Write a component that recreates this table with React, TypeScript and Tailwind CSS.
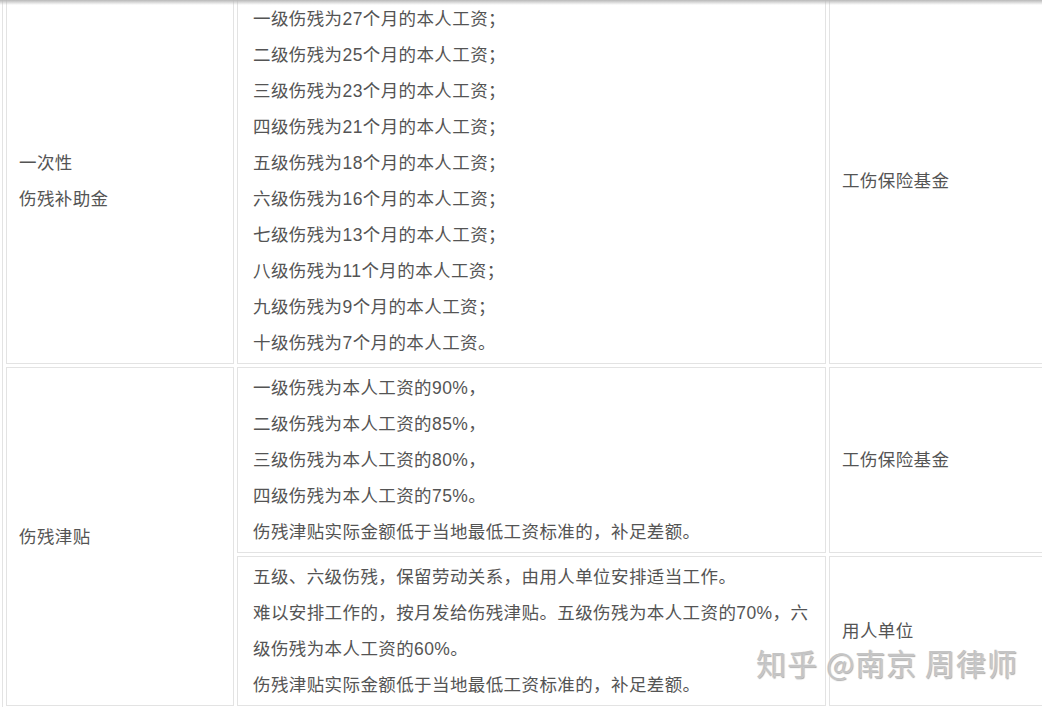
import React from "react";

const Cell = ({ children, className = "" }: { children: React.ReactNode; className?: string }) => (
  <div className={`border border-[#e3e3e3] py-[2px] flex flex-col justify-center bg-white ${className}`}>
    {children}
  </div>
);

const Lines = ({ lines }: { lines: string[] }) => (
  <>
    {lines.map((l, i) => (
      <div key={i} className="whitespace-nowrap">
        {l}
      </div>
    ))}
  </>
);

export default function App() {
  const row1 = [
    "一级伤残为27个月的本人工资；",
    "二级伤残为25个月的本人工资；",
    "三级伤残为23个月的本人工资；",
    "四级伤残为21个月的本人工资；",
    "五级伤残为18个月的本人工资；",
    "六级伤残为16个月的本人工资；",
    "七级伤残为13个月的本人工资；",
    "八级伤残为11个月的本人工资；",
    "九级伤残为9个月的本人工资；",
    "十级伤残为7个月的本人工资。",
  ];
  const row2a = [
    "一级伤残为本人工资的90%，",
    "二级伤残为本人工资的85%，",
    "三级伤残为本人工资的80%，",
    "四级伤残为本人工资的75%。",
    "伤残津贴实际金额低于当地最低工资标准的，补足差额。",
  ];
  const row2b = [
    "五级、六级伤残，保留劳动关系，由用人单位安排适当工作。",
    "难以安排工作的，按月发给伤残津贴。五级伤残为本人工资的70%，六",
    "级伤残为本人工资的60%。",
    "伤残津贴实际金额低于当地最低工资标准的，补足差额。",
  ];
  return (
    <div className="relative w-[1042px] h-[707px] overflow-hidden bg-white font-['Liberation_Sans','Noto_Sans_CJK_SC',sans-serif] text-[17.5px] leading-[36px] tracking-[0.4px] text-[#545454]">
      <div className="ml-[2px] mt-[-6px] w-[1120px] border border-[#e3e3e3] p-[3px] flex flex-col gap-[3px]">
        <div className="flex gap-[3px]">
          <Cell className="w-[228px] px-[12px]">
            <div>一次性</div>
            <div>伤残补助金</div>
          </Cell>
          <Cell className="w-[589px] px-[15px]">
            <Lines lines={row1} />
          </Cell>
          <Cell className="flex-1 px-[12px]">
            <div>工伤保险基金</div>
          </Cell>
        </div>
        <div className="flex gap-[3px]">
          <Cell className="w-[228px] px-[12px]">
            <div>伤残津贴</div>
          </Cell>
          <div className="flex-1 flex flex-col gap-[3px]">
            <div className="flex gap-[3px]">
              <Cell className="w-[589px] px-[15px]">
                <Lines lines={row2a} />
              </Cell>
              <Cell className="flex-1 px-[12px]">
                <div>工伤保险基金</div>
              </Cell>
            </div>
            <div className="flex gap-[3px]">
              <Cell className="w-[589px] px-[15px]">
                <Lines lines={row2b} />
              </Cell>
              <Cell className="flex-1 px-[12px]">
                <div>用人单位</div>
              </Cell>
            </div>
          </div>
        </div>
      </div>
      <div className="absolute top-0 left-0 right-0 h-[5px] bg-linear-to-b from-[#b8b8b8] to-transparent" />
      <div className="absolute left-[756px] top-[643px] whitespace-nowrap text-[30px] leading-[38px] tracking-[1px] text-[#c4c4c4] [text-shadow:0_0_2px_#ffffff,1px_1px_1px_#9a9a9a] font-['Noto_Sans_CJK_SC',sans-serif]">
        知乎 @南京 周律师
      </div>
    </div>
  );
}
